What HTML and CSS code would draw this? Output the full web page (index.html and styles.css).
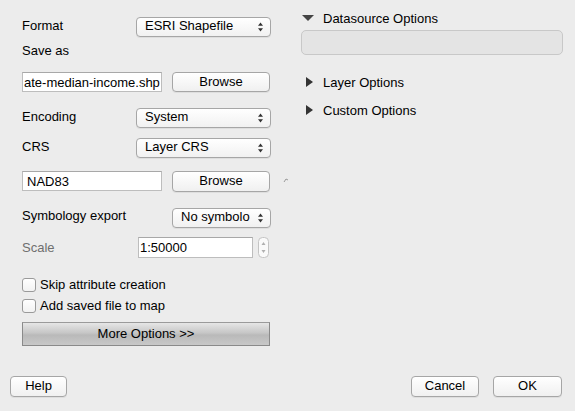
FILE: index.html
```html
<!DOCTYPE html>
<html>
<head>
<meta charset="utf-8">
<link rel="stylesheet" href="styles.css">
</head>
<body>
<div class="dialog">
  <div class="main">
    <div class="left">
      <div class="row r-format">
        <span class="label">Format</span>
        <div class="combo w-wide"><span>ESRI Shapefile</span><svg class="arrows" width="7" height="10" viewBox="0 0 7 10"><path d="M3.5 0.5 L6 3.8 L1 3.8 Z M3.5 9.5 L6 6.2 L1 6.2 Z" fill="#333"/></svg></div>
      </div>
      <div class="row r-saveas"><span class="label">Save as</span></div>
      <div class="row r-file">
        <div class="input w-file"><span class="clip">ate-median-income.shp</span></div>
        <button class="btn w-browse">Browse</button>
      </div>
      <div class="row r-enc">
        <span class="label">Encoding</span>
        <div class="combo w-wide"><span>System</span><svg class="arrows" width="7" height="10" viewBox="0 0 7 10"><path d="M3.5 0.5 L6 3.8 L1 3.8 Z M3.5 9.5 L6 6.2 L1 6.2 Z" fill="#333"/></svg></div>
      </div>
      <div class="row r-crs">
        <span class="label">CRS</span>
        <div class="combo w-wide"><span>Layer CRS</span><svg class="arrows" width="7" height="10" viewBox="0 0 7 10"><path d="M3.5 0.5 L6 3.8 L1 3.8 Z M3.5 9.5 L6 6.2 L1 6.2 Z" fill="#333"/></svg></div>
      </div>
      <div class="row r-nad">
        <div class="input w-file"><span>NAD83</span></div>
        <button class="btn w-browse tall">Browse</button>
        <svg class="grip" width="6" height="5" viewBox="0 0 6 5"><path d="M1 4 L3 1 L5 2" stroke="#999" stroke-width="1" fill="none"/></svg>
      </div>
      <div class="row r-sym">
        <span class="label">Symbology export</span>
        <div class="combo w-narrow"><span>No symbolo</span><svg class="arrows" width="7" height="10" viewBox="0 0 7 10"><path d="M3.5 0.5 L6 3.8 L1 3.8 Z M3.5 9.5 L6 6.2 L1 6.2 Z" fill="#333"/></svg></div>
      </div>
      <div class="row r-scale">
        <span class="label muted">Scale</span>
        <div class="input w-scale"><span>1:50000</span></div>
        <div class="spin"><svg width="11" height="21" viewBox="0 0 11 21"><rect x="0.5" y="0.5" width="10" height="20" rx="4" fill="#fafafa" stroke="#c4c4c4"/><path d="M5.5 5 L7.5 8 L3.5 8 Z M5.5 16 L7.5 13 L3.5 13 Z" fill="#b0b0b0"/></svg></div>
      </div>
      <div class="row r-chk1"><span class="check"></span><span class="clabel">Skip attribute creation</span></div>
      <div class="row r-chk2"><span class="check"></span><span class="clabel">Add saved file to map</span></div>
      <div class="row r-more"><button class="more">More Options &gt;&gt;</button></div>
    </div>
    <div class="right">
      <div class="group open">
        <svg class="tri" width="12" height="6" viewBox="0 0 12 6"><path d="M0 0 L12 0 L6 6 Z" fill="#444"/></svg>
        <span>Datasource Options</span>
      </div>
      <div class="dsbox"></div>
      <div class="group g-layer">
        <svg class="tri-r" width="7" height="10" viewBox="0 0 7 10"><path d="M0 0 L7 5 L0 10 Z" fill="#333"/></svg>
        <span>Layer Options</span>
      </div>
      <div class="group g-custom">
        <svg class="tri-r" width="7" height="10" viewBox="0 0 7 10"><path d="M0 0 L7 5 L0 10 Z" fill="#333"/></svg>
        <span>Custom Options</span>
      </div>
    </div>
  </div>
  <div class="footer">
    <button class="btn w-help">Help</button>
    <div class="spacer"></div>
    <button class="btn w-cancel">Cancel</button>
    <button class="btn w-ok">OK</button>
  </div>
</div>
</body>
</html>
```
FILE: styles.css
```css
* { box-sizing: border-box; }
html, body {
  margin: 0;
  padding: 0;
  background: #ececec;
  font-family: "Liberation Sans", Arial, sans-serif;
  font-size: 13px;
  color: #000;
}
.dialog {
  width: 575px;
  height: 411px;
  display: flex;
  flex-direction: column;
}
.main {
  display: flex;
  flex: 1;
}
.left {
  width: 271px;
  padding-left: 22px;
  display: flex;
  flex-direction: column;
}
.row {
  display: flex;
  align-items: center;
  position: relative;
}
.label { flex: 1; }
.r-format .label, .r-enc .label, .r-crs .label, .r-sym .label { padding-bottom: 4px; }
.muted { color: #6f6f6f; }
.r-format { margin-top: 17px; height: 20px; }
.r-saveas { margin-top: 3px; height: 20px; }
.r-file { margin-top: 12px; height: 20px; }
.r-enc { margin-top: 16px; height: 20px; }
.r-crs { margin-top: 10px; height: 20px; }
.r-nad { margin-top: 13px; height: 20px; }
.r-sym { margin-top: 16px; height: 21px; }
.r-scale { margin-top: 9px; height: 21px; }
.r-chk1 { margin-top: 19px; height: 16px; }
.r-chk2 { margin-top: 5px; height: 16px; }
.r-chk1 .clabel, .r-chk2 .clabel { padding-bottom: 2px; }
.r-more { margin-top: 8px; height: 24px; }

.combo {
  height: 20px;
  border: 1px solid #a6a6a6;
  border-radius: 4px;
  background: linear-gradient(#ffffff, #f1f1f1);
  display: flex;
  align-items: center;
  padding: 0 6px 0 8px;
  box-shadow: 0 1px 0 rgba(0,0,0,0.06);
}
.combo span { flex: 1; white-space: nowrap; overflow: hidden; padding-bottom: 3px; }
.w-wide { width: 135px; }
.w-narrow { width: 99px; }
.arrows { flex: none; }

.input {
  height: 20px;
  background: #fff;
  border: 1px solid #bdbdbd;
  border-top-color: #a8a8a8;
  display: flex;
  align-items: center;
  padding-left: 1px;
  overflow: hidden;
  white-space: nowrap;
}
.w-file { width: 140px; }
.w-scale { width: 115px; margin-right: 5px; height: 21px; }
.spin { width: 11px; height: 21px; margin-right: 2px; }
.spin svg { display: block; }
.r-nad .input span { padding-left: 3px; }

.btn {
  font-family: inherit;
  font-size: 13px;
  color: #000;
  height: 20px;
  border: 1px solid #a6a6a6;
  border-radius: 4px;
  background: linear-gradient(#ffffff, #f0f0f0);
  padding: 0 0 2px 0;
  box-shadow: 0 1px 0 rgba(0,0,0,0.06);
}
.w-browse { width: 98px; margin-left: 10px; }
.tall { height: 21px; }
.grip { position: absolute; left: 261px; top: 7px; }

.check {
  width: 14px;
  height: 14px;
  border: 1px solid #9a9a9a;
  border-radius: 3px;
  background: linear-gradient(#ffffff, #f2f2f2);
  margin-right: 4px;
}
.more {
  width: 248px;
  height: 24px;
  font-family: inherit;
  font-size: 13px;
  color: #000;
  border: 1px solid #8a8a8a;
  border-top-color: #9a9a9a;
  background: linear-gradient(#e6e6e6 0%, #c6c6c6 45%, #b9b9b9 55%, #c8c8c8 100%);
  padding: 0 0 2px 0;
}

.right {
  margin-left: 30px;
  width: 262px;
  display: flex;
  flex-direction: column;
}
.group {
  display: flex;
  align-items: center;
  height: 16px;
}
.group.open { margin-top: 10px; }
.group .tri { margin-left: 1px; margin-right: 9px; }
.group .tri-r { margin-left: 5px; margin-right: 10px; }
.dsbox {
  margin-top: 4px;
  height: 25px;
  border: 1px solid #c8c8c8;
  border-radius: 5px;
  background: #e4e4e4;
}
.g-layer { margin-top: 19px; }
.g-custom { margin-top: 12px; }

.footer {
  display: flex;
  align-items: flex-end;
  padding: 0 13px 14px 10px;
  height: 49px;
}
.spacer { flex: 1; }
.w-help { width: 57px; height: 21px; }
.w-cancel { width: 68px; height: 21px; }
.w-ok { width: 69px; height: 21px; margin-left: 14px; }
```
